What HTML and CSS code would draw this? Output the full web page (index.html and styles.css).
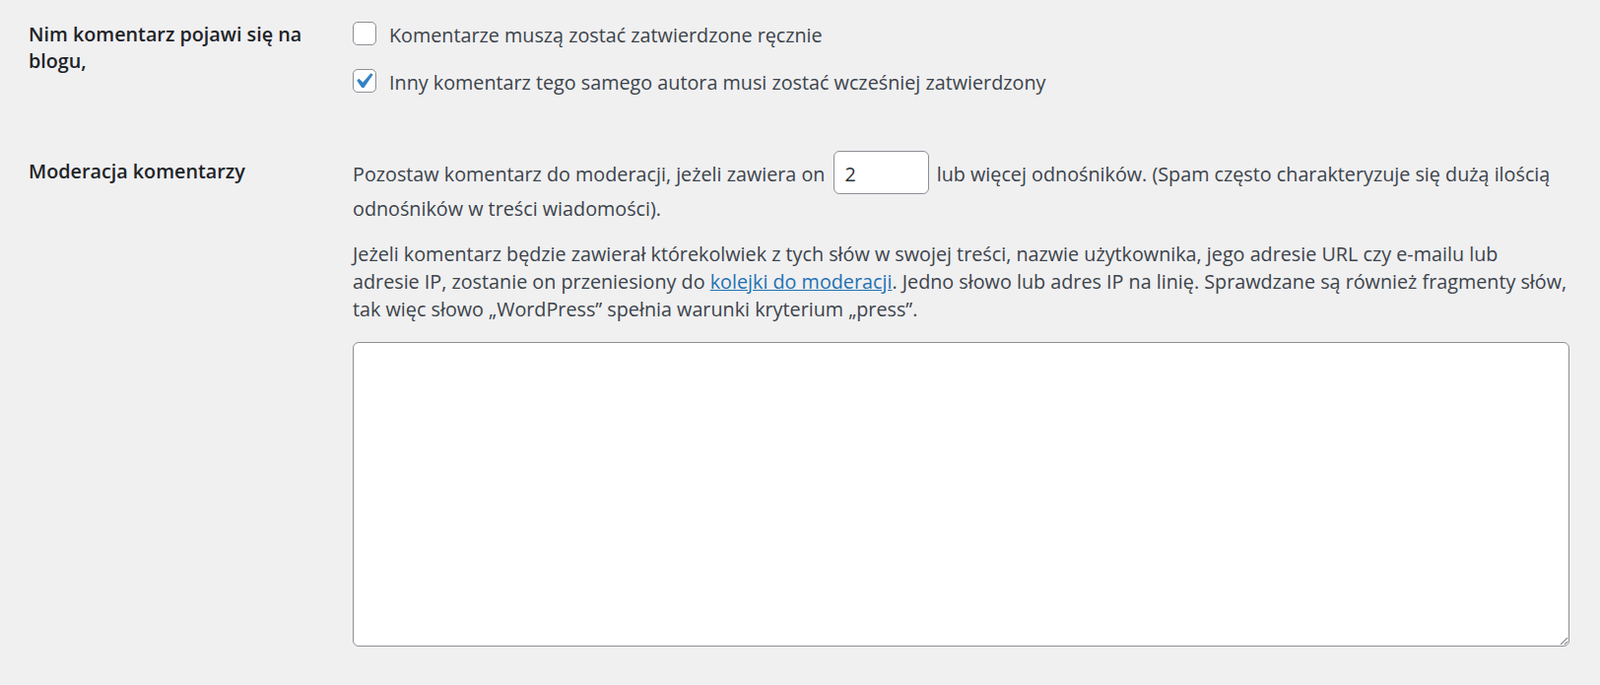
FILE: index.html
```html
<!DOCTYPE html>
<html lang="pl">
<head>
<meta charset="utf-8">
<title>Ustawienia dyskusji</title>
<link rel="stylesheet" href="styles.css">
</head>
<body>
<div class="settings">
  <div class="form-row row-approval">
    <div class="row-label">Nim komentarz pojawi się na blogu,</div>
    <fieldset class="row-field checks">
      <label class="check"><input type="checkbox"><span>Komentarze muszą zostać zatwierdzone ręcznie</span></label>
      <label class="check"><input type="checkbox" checked><span>Inny komentarz tego samego autora musi zostać wcześniej zatwierdzony</span></label>
    </fieldset>
  </div>
  <div class="form-row row-moderation">
    <div class="row-label">Moderacja komentarzy</div>
    <div class="row-field">
      <p class="desc">Pozostaw komentarz do moderacji, jeżeli zawiera on <input type="number" class="count" value="2"> lub więcej odnośników. (Spam często charakteryzuje się dużą ilością<br>odnośników w treści wiadomości).</p>
      <p class="desc">Jeżeli komentarz będzie zawierał którekolwiek z tych słów w swojej treści, nazwie użytkownika, jego adresie URL czy e-mailu lub<br>adresie IP, zostanie on przeniesiony do <a href="#" class="link">kolejki do moderacji</a>. Jedno słowo lub adres IP na linię. Sprawdzane są również fragmenty słów,<br>tak więc słowo „WordPress” spełnia warunki kryterium „press”.</p>
      <textarea class="keys" aria-label="Moderacja komentarzy"></textarea>
    </div>
  </div>
</div>
</body>
</html>
```

FILE: styles.css
```css
html, body {
  margin: 0;
  background: #f0f0f1;
}

body {
  font-family: "Open Sans", "Noto Sans", sans-serif;
  font-size: 19.75px;
  color: #3c434a;
}

.settings {
  padding: 0 31px 0 29px;
}

.form-row {
  display: grid;
  grid-template-columns: 329px 1fr;
}

.row-approval {
  padding-top: 21px;
}

.row-moderation {
  padding-top: 55px;
}

.row-label {
  font-weight: 600;
  color: #1d2327;
  line-height: 27px;
  padding-right: 29px;
}

.row-moderation .row-label {
  padding-top: 7px;
}

.row-field {
  min-width: 0;
}

.checks {
  border: 0;
  margin: 0;
  padding: 1px 0 0;
  display: flex;
  flex-direction: column;
  align-items: flex-start;
  gap: 20px;
}

.check {
  display: flex;
  align-items: flex-start;
  gap: 13px;
  line-height: 28px;
}

.check input {
  appearance: none;
  -webkit-appearance: none;
  flex: none;
  margin: 0;
  width: 24px;
  height: 24px;
  box-sizing: border-box;
  border: 1px solid #8c8f94;
  border-radius: 5px;
  background-color: #fff;
}

.check input:checked {
  background-image: url("data:image/svg+xml,%3Csvg xmlns='http://www.w3.org/2000/svg' viewBox='0 0 20 20'%3E%3Cpath d='M14.83 4.89l1.34.94-5.81 8.38H9.02L5.78 9.67l1.34-1.25 2.57 2.4z' fill='%233582c4'/%3E%3C/svg%3E");
  background-repeat: no-repeat;
  background-size: 31.5px 31.5px;
  background-position: -6px -4.5px;
}

.desc {
  margin: 0;
  line-height: 28px;
  white-space: nowrap;
}

.desc + .desc {
  margin-top: 18px;
}

.count {
  width: 97px;
  height: 44px;
  box-sizing: border-box;
  margin: 0 3px 1px;
  padding: 3px 0 0 11px;
  border: 1px solid #8c8f94;
  border-radius: 6px;
  background: #fff;
  font: inherit;
  line-height: normal;
  color: #2c3338;
  vertical-align: baseline;
  -moz-appearance: textfield;
}

.count::-webkit-inner-spin-button,
.count::-webkit-outer-spin-button {
  -webkit-appearance: none;
  margin: 0;
}

.link {
  color: #2271b1;
  text-decoration: underline;
}

.keys {
  display: block;
  width: 100%;
  height: 309px;
  box-sizing: border-box;
  margin: 19px 0 0;
  border: 1px solid #8c8f94;
  border-radius: 6px;
  background: #fff;
  font: inherit;
  color: #2c3338;
}
```
